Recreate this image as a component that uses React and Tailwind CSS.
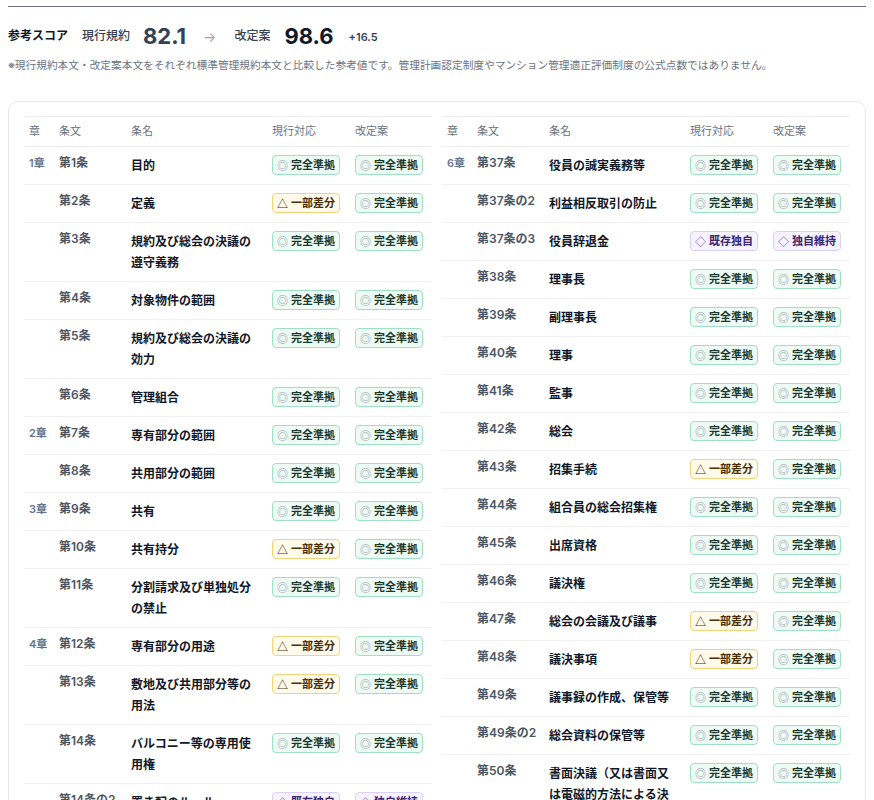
import React from "react";

const FONT = { fontFamily: '"Inter", "Noto Sans CJK JP", sans-serif' };

const BADGES = {
  ok: { icon: "◎", label: "完全準拠", cls: "bg-[#eefbf5] border-[#9fdfc4] text-[#1d3a30]", iconCls: "text-[#9ca3af]" },
  diff: { icon: "△", label: "一部差分", cls: "bg-[#fffaea] border-[#f3d27a] text-[#4a2f0a]", iconCls: "text-[#4a2f0a]" },
  own: { icon: "◇", label: "既存独自", cls: "bg-[#f6f3ff] border-[#d8cffa] text-[#3b2370]", iconCls: "text-[#7c6bb0]" },
  keep: { icon: "◇", label: "独自維持", cls: "bg-[#f6f3ff] border-[#d8cffa] text-[#3b2370]", iconCls: "text-[#7c6bb0]" },
};

const leftRows = [
  ["1章", "第1条", "目的", "ok", "ok"],
  ["", "第2条", "定義", "diff", "ok"],
  ["", "第3条", "規約及び総会の決議の遵守義務", "ok", "ok"],
  ["", "第4条", "対象物件の範囲", "ok", "ok"],
  ["", "第5条", "規約及び総会の決議の効力", "ok", "ok"],
  ["", "第6条", "管理組合", "ok", "ok"],
  ["2章", "第7条", "専有部分の範囲", "ok", "ok"],
  ["", "第8条", "共用部分の範囲", "ok", "ok"],
  ["3章", "第9条", "共有", "ok", "ok"],
  ["", "第10条", "共有持分", "diff", "ok"],
  ["", "第11条", "分割請求及び単独処分の禁止", "ok", "ok"],
  ["4章", "第12条", "専有部分の用途", "diff", "ok"],
  ["", "第13条", "敷地及び共用部分等の用法", "diff", "ok"],
  ["", "第14条", "バルコニー等の専用使用権", "ok", "ok"],
  ["", "第14条の2", "置き配のルール", "own", "keep"],
];

const rightRows = [
  ["6章", "第37条", "役員の誠実義務等", "ok", "ok"],
  ["", "第37条の2", "利益相反取引の防止", "ok", "ok"],
  ["", "第37条の3", "役員辞退金", "own", "keep"],
  ["", "第38条", "理事長", "ok", "ok"],
  ["", "第39条", "副理事長", "ok", "ok"],
  ["", "第40条", "理事", "ok", "ok"],
  ["", "第41条", "監事", "ok", "ok"],
  ["", "第42条", "総会", "ok", "ok"],
  ["", "第43条", "招集手続", "diff", "ok"],
  ["", "第44条", "組合員の総会招集権", "ok", "ok"],
  ["", "第45条", "出席資格", "ok", "ok"],
  ["", "第46条", "議決権", "ok", "ok"],
  ["", "第47条", "総会の会議及び議事", "diff", "ok"],
  ["", "第48条", "議決事項", "diff", "ok"],
  ["", "第49条", "議事録の作成、保管等", "ok", "ok"],
  ["", "第49条の2", "総会資料の保管等", "ok", "ok"],
  ["", "第50条", "書面決議（又は書面又は電磁的方法による決議）", "ok", "ok"],
];

const Badge = ({ type }) => {
  const b = BADGES[type];
  return (
    <span className={`flex items-center h-[20px] w-[68px] justify-center gap-[3px] rounded-[4px] border text-[11px] font-bold leading-none ${b.cls}`}>
      <span className={`text-[11px] leading-none ${b.iconCls}`} style={{ fontFamily: '"Noto Sans CJK JP", sans-serif' }}>{b.icon}</span>
      {b.label}
    </span>
  );
};

const ArticleTable = ({ rows }) => (
  <div className="border-t border-[#ececec]">
    {/* header */}
    <div className="grid grid-cols-[30px_72px_141px_83px_82px] h-[30px] items-center border-b border-[#ececec] text-[11px] text-[#6b7280]">
      <div className="pl-[5px]">章</div>
      <div className="pl-[5px]">条文</div>
      <div className="pl-[5px]">条名</div>
      <div className="pl-[5px]">現行対応</div>
      <div className="pl-[5px]">改定案</div>
    </div>
    {rows.map(([ch, art, name, cur, rev]) => (
      <div key={art} className="grid grid-cols-[30px_72px_141px_83px_82px] items-start border-b border-[#f0f0f0] py-[8px]">
        <div className="pl-[5px] text-[11px] leading-[16px] font-semibold text-[#64748b]">{ch}</div>
        <div className="pl-[5px] text-[12px] leading-[16px] font-semibold text-[#4b5563] whitespace-nowrap">{art}</div>
        <div className="pl-[5px] pr-[10px] text-[12px] leading-[21px] font-bold text-[#111827]">{name}</div>
        <div className="pl-[5px] flex"><Badge type={cur} /></div>
        <div className="pl-[5px] flex"><Badge type={rev} /></div>
      </div>
    ))}
  </div>
);

const App = () => {
  return (
    <div className="min-h-screen bg-white px-[8px] pt-[6px]" style={FONT}>
      {/* score summary */}
      <div className="border-t border-[#6b7280] pt-[15px]">
        <div className="flex items-center h-[28px]">
          <span className="text-[12px] font-bold text-[#111827]">参考スコア</span>
          <span className="ml-[14px] text-[12px] font-medium text-[#374151]">現行規約</span>
          <span className="ml-[13px] text-[22px] font-bold text-[#334155] leading-none">82.1</span>
          <span className="ml-[17px] text-[14px] text-[#9ca3af]">→</span>
          <span className="ml-[18px] text-[12px] font-medium text-[#374151]">改定案</span>
          <span className="ml-[14px] text-[22px] font-bold text-[#111827] leading-none">98.6</span>
          <span className="ml-[15px] text-[11px] font-semibold text-[#374151] pt-[2px]">+16.5</span>
        </div>
        <p className="mt-[8px] text-[10.7px] text-[#6b7280] leading-[16px]">
          ※現行規約本文・改定案本文をそれぞれ標準管理規約本文と比較した参考値です。管理計画認定制度やマンション管理適正評価制度の公式点数ではありません。
        </p>
      </div>

      {/* comparison card */}
      <div className="mt-[27px] rounded-[10px] border border-[#e5e7eb] px-[15px] pt-[14px] pb-[16px]">
        <div className="grid grid-cols-[408px_408px] gap-[10px]">
          <ArticleTable rows={leftRows} />
          <ArticleTable rows={rightRows} />
        </div>
      </div>
    </div>
  );
};

export default App;
